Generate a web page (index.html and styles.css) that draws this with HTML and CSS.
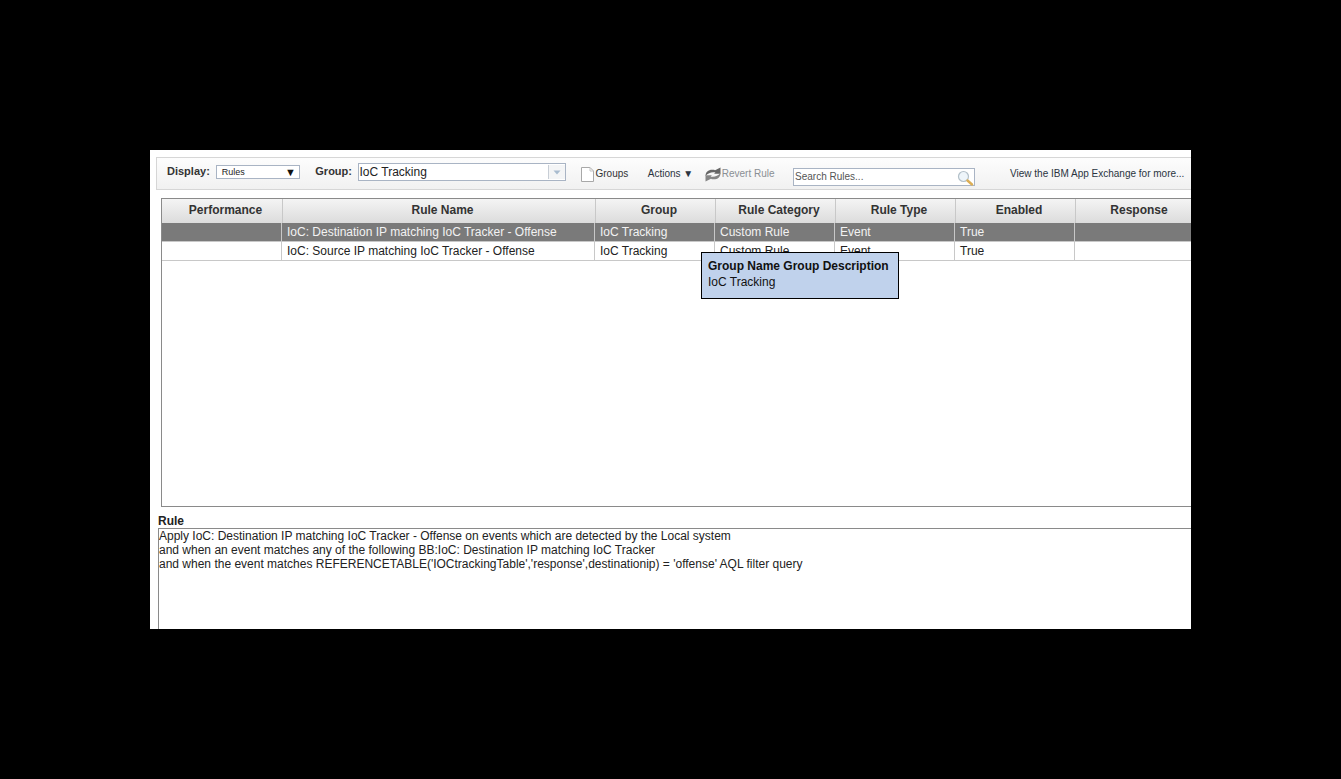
FILE: index.html
```html
<!DOCTYPE html>
<html lang="en">
<head>
<meta charset="utf-8">
<title>Rules</title>
<link rel="stylesheet" href="styles.css">
</head>
<body>
<main class="panel">
  <div class="toolbar">
    <span class="label label-display">Display:</span>
    <div class="select"><span>Rules</span><span class="select-arrow">▼</span></div>
    <span class="label label-group">Group:</span>
    <div class="combo"><span class="combo-text">IoC Tracking</span><span class="combo-btn"><svg width="8" height="5" viewBox="0 0 8 5"><path d="M0.5 0.5h7L4 4.500z" fill="#a9bccf"/></svg></span></div>
    <span class="tool tool-groups">
      <svg width="13" height="15" viewBox="0 0 13 15"><path d="M0.500 0.500h8.500l3.500 3.500v10.500h-12z" fill="#fff" stroke="#a8a8a8"/><path d="M9 0.500v3.500h3.500" fill="none" stroke="#c4c4c4"/></svg>
      <span>Groups</span>
    </span>
    <span class="tool tool-actions">Actions ▼</span>
    <span class="tool tool-revert">
      <svg width="16" height="15" viewBox="0 0 16 15"><path d="M0.500 9C0.500 4.500 4 2 9 2.800L10 3.200 15.500 0.500V6.800L9 6.800 10.500 5.500C6.500 4.800 3.500 5.800 0.500 9z" fill="#666"/><path d="M15.500 6C15.500 10.500 12 13 7 12.200L6 11.800 0.500 14.500V8.200L7 8.200 5.500 9.500C9.500 10.200 12.500 9.200 15.500 6z" fill="#858585"/></svg>
      <span>Revert Rule</span>
    </span>
    <div class="search">
      <span>Search Rules...</span>
      <svg class="search-icon" width="17" height="16" viewBox="0 0 17 16"><circle cx="6.500" cy="6.500" r="5" fill="#eef5fa" stroke="#b3c0c9" stroke-width="1.200"/><path d="M10.500 10.500l4.500 4" stroke="#dcae55" stroke-width="2.400" stroke-linecap="round"/></svg>
    </div>
    <span class="tool tool-exchange">View the IBM App Exchange for more...</span>
  </div>

  <section class="table">
    <div class="thead">
      <div class="th col-perf">Performance</div>
      <div class="th col-name">Rule Name</div>
      <div class="th col-std">Group</div>
      <div class="th col-std">Rule Category</div>
      <div class="th col-std">Rule Type</div>
      <div class="th col-std">Enabled</div>
      <div class="th col-std">Response</div>
    </div>
    <div class="row row-selected">
      <div class="td col-perf"></div>
      <div class="td col-name">IoC: Destination IP matching IoC Tracker - Offense</div>
      <div class="td col-std">IoC Tracking</div>
      <div class="td col-std">Custom Rule</div>
      <div class="td col-std">Event</div>
      <div class="td col-std">True</div>
      <div class="td col-std"></div>
    </div>
    <div class="row">
      <div class="td col-perf"></div>
      <div class="td col-name">IoC: Source IP matching IoC Tracker - Offense</div>
      <div class="td col-std">IoC Tracking</div>
      <div class="td col-std">Custom Rule</div>
      <div class="td col-std">Event</div>
      <div class="td col-std">True</div>
      <div class="td col-std"></div>
    </div>
  </section>

  <h2 class="rule-title">Rule</h2>
  <div class="rule-box">
    <div>Apply IoC: Destination IP matching IoC Tracker - Offense on events which are detected by the Local system</div>
    <div>and when an event matches any of the following BB:IoC: Destination IP matching IoC Tracker</div>
    <div>and when the event matches REFERENCETABLE('IOCtrackingTable','response',destinationip) = 'offense' AQL filter query</div>
  </div>

  <div class="tooltip">
    <div class="tooltip-title">Group Name Group Description</div>
    <div>IoC Tracking</div>
  </div>
</main>
</body>
</html>
```
FILE: styles.css
```css
* { box-sizing: border-box; }
html, body { margin: 0; height: 100%; }
body {
  background: #000;
  padding: 150px 0 0 150px;
  font-family: "Liberation Sans", Arial, sans-serif;
  color: #222;
  overflow: hidden;
}
.panel {
  position: relative;
  width: 1041px;
  height: 479px;
  background: #fff;
  overflow: hidden;
  padding-top: 7px;
}
.toolbar {
  display: flex;
  align-items: flex-start;
  margin-left: 6px;
  width: 1041px;
  height: 33px;
  border: 1px solid #d6d6d6;
  border-right: 0;
  background: linear-gradient(#fdfdfd, #f1f1f1);
  font-size: 10px;
  white-space: nowrap;
}
.label { font-size: 11px; font-weight: 700; color: #333; line-height: 13px; margin-top: 7px; }
.label-display { margin-left: 10px; }
.select {
  display: flex;
  justify-content: space-between;
  width: 84px;
  height: 14px;
  margin: 7px 0 0 6px;
  padding: 0 3px 0 5px;
  border: 1px solid #a9b4c4;
  background: #fff;
  font-size: 9px;
  line-height: 13px;
}
.select-arrow { font-size: 11px; line-height: 12px; color: #111; }
.label-group { margin-left: 15.500px; }
.combo {
  display: flex;
  justify-content: space-between;
  width: 208px;
  height: 18px;
  margin: 5px 0 0 6.500px;
  border: 1px solid #a9b4c4;
  background: #fff;
}
.combo-text { font-size: 12px; line-height: 17px; color: #222; }
.combo-btn {
  display: flex;
  align-items: center;
  justify-content: center;
  width: 17px;
  margin: 1px 0;
  border-left: 1px solid #c8ced6;
  background: #f4f5f6;
}
.tool { line-height: 12px; color: #333; }
.tool-groups { display: flex; align-items: flex-start; margin: 9px 0 0 15px; }
.tool-groups span { margin-top: 1px; margin-left: 1px; }
.tool-actions { margin: 10px 0 0 19.500px; color: #2a3440; }
.tool-revert { display: flex; margin: 9px 0 0 11.500px; color: #8a8f94; }
.tool-revert span { margin-left: 1px; margin-top: 1px; }
.search {
  display: flex;
  justify-content: space-between;
  width: 182px;
  height: 18px;
  margin: 10px 0 0 18.500px;
  padding: 1px 0 0 1px;
  border: 1px solid #a9b4c4;
  background: #fff;
  line-height: 13px;
  color: #555;
}
.search-icon { flex: none; }
.tool-exchange { margin: 10px 0 0 35px; color: #2a3440; }
.table {
  margin: 8px 0 0 11px;
  width: 1040px;
  height: 309px;
  border: 1px solid #8a8a8a;
  border-right: 0;
}
.thead {
  display: flex;
  height: 24px;
  background: linear-gradient(#f4f4f4, #dcdcdc);
}
.th {
  flex: none;
  height: 24px;
  padding-left: 7px;
  border-right: 1px solid #c8c8c8;
  font-size: 12px;
  font-weight: 700;
  line-height: 22px;
  text-align: center;
  color: #333;
}
.row {
  display: flex;
  height: 19px;
  border-bottom: 1px solid #c8c8c8;
  font-size: 12px;
  line-height: 18px;
}
.row-selected { background: #7a7a7a; color: #f2f2f2; }
.td {
  flex: none;
  height: 18px;
  padding-left: 5px;
  border-right: 1px solid #c8c8c8;
  white-space: nowrap;
  overflow: hidden;
}
.th.col-perf { width: 121px; }
.td.col-perf { width: 120px; }
.th.col-name { width: 313px; }
.td.col-name { width: 313px; }
.col-std { width: 120px; }
.rule-title {
  margin: 7px 0 0 8px;
  font-size: 12px;
  line-height: 14px;
  font-weight: 700;
  color: #222;
}
.rule-box {
  margin-left: 8px;
  width: 1040px;
  height: 110px;
  border: 1px solid #8a8a8a;
  border-right: 0;
  font-size: 12px;
  line-height: 14px;
  color: #222;
  white-space: nowrap;
}
.tooltip {
  position: absolute;
  left: 551px;
  top: 102px;
  width: 198px;
  height: 47px;
  padding: 5px 6px 0;
  border: 1px solid #000;
  background: #c0d2ec;
  font-size: 12px;
  line-height: 16px;
  color: #111;
}
.tooltip-title { font-weight: 700; }
```
